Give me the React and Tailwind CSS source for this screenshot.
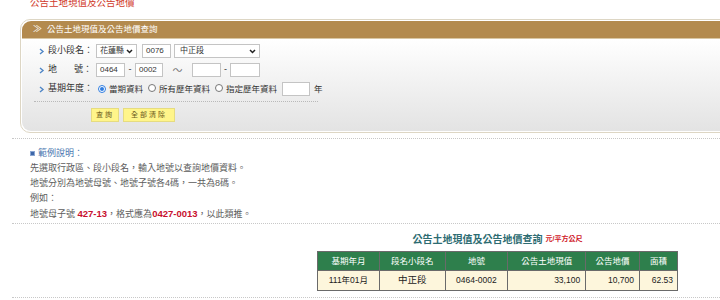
import React from 'react';

const Arrow = () => (
  <svg width="6" height="7" viewBox="0 0 6 7" className="shrink-0">
    <path d="M1 1 L4 3.5 L1 6" fill="none" stroke="#4f86c6" strokeWidth="1.4" />
  </svg>
);

const Caret = () => (
  <svg width="7" height="5" viewBox="0 0 7 5">
    <path d="M1 1 L3.5 3.5 L6 1" fill="none" stroke="#222" strokeWidth="1.5" />
  </svg>
);

const Box = ({ w, children, className = '' }) => (
  <div className={`h-[14px] ${w} border border-[#c4c4c4] bg-white flex items-center px-[3px] text-[8px] text-[#333] ${className}`}>
    {children}
  </div>
);

const Radio = ({ on }) => (
  <span className={`inline-flex items-center justify-center w-[8px] h-[8px] rounded-full border ${on ? 'border-[#2f7de1]' : 'border-[#777]'} bg-white`}>
    {on && <span className="w-[4px] h-[4px] rounded-full bg-[#2f7de1]" />}
  </span>
);

const Row = ({ label, children }) => (
  <div className="h-[14px] flex items-center">
    <div className="w-[26px] flex justify-end pr-[3px]"><Arrow /></div>
    <div className="w-[48px] text-[9px] text-[#333]">{label}</div>
    {children}
  </div>
);

export default function App() {
  return (
    <div className="w-[720px] h-[300px] overflow-hidden bg-white font-['Liberation_Sans','Noto_Sans_CJK_TC',sans-serif] text-[#333]">
      <div className="pl-[30px] -mt-[3px] text-[9.5px] leading-[12px] text-[#d03a2a]">公告土地現值及公告地價</div>

      <div className="ml-[20px] mt-[10px] w-[760px] rounded-l-[10px] border border-[#ddd6c4] p-px bg-white">
        <div className="h-[18px] rounded-tl-[9px] bg-[#b38a4e] border-b border-[#d9c7a4] flex items-center pl-[11px] gap-[5px] text-white text-[8.5px]">
          <span className="text-[9px] leading-none">≫</span>
          <span>公告土地現值及公告地價查詢</span>
        </div>
        <div className="h-[92px] rounded-bl-[9px] bg-gradient-to-b from-white to-[#e3e3e3] pt-[5px]">
          <div className="flex flex-col gap-[5px]">
            <Row label="段小段名：">
              <Box w="w-[41px]" className="justify-between"><span>花蓮縣</span><Caret /></Box>
              <Box w="w-[29px]" className="ml-[5px]">0076</Box>
              <Box w="w-[86px]" className="ml-[3px] justify-between pl-[5px]"><span>中正段</span><Caret /></Box>
            </Row>
            <Row label={<span>地<span className="inline-block w-[17px]" />號：</span>}>
              <Box w="w-[29px]">0464</Box>
              <span className="w-[10px] text-center text-[9px]">-</span>
              <Box w="w-[28px]">0002</Box>
              <span className="w-[29px] text-center text-[10px] text-[#777]">～</span>
              <Box w="w-[29px]" />
              <span className="w-[9px] text-center text-[9px]">-</span>
              <Box w="w-[30px]" />
            </Row>
            <Row label="基期年度：">
              <div className="flex items-center gap-[2px] ml-[2px] text-[8.5px]">
                <Radio on />
                <span className="ml-[1px]">當期資料</span>
                <span className="ml-[3px]"><Radio /></span>
                <span className="ml-[1px]">所有歷年資料</span>
                <span className="ml-[3px]"><Radio /></span>
                <span className="ml-[1px]">指定歷年資料</span>
              </div>
              <Box w="w-[28px]" className="ml-[5px]" />
              <span className="ml-[4px] text-[8.5px]">年</span>
            </Row>
          </div>
          <div className="ml-[12px] mt-[5px] w-[284px] border-t border-dotted border-[#b9b9b9]" />
          <div className="ml-[69px] mt-[6px] flex gap-[4px]">
            <div className="h-[14px] w-[28px] bg-[#fff58a] border border-[#e6dc80] flex items-center justify-center text-[7px] tracking-[2px] text-[#6b5a1a]">查詢</div>
            <div className="h-[14px] w-[52px] bg-[#fff58a] border border-[#e6dc80] flex items-center justify-center text-[7px] tracking-[2px] text-[#6b5a1a]">全部清除</div>
          </div>
        </div>
      </div>

      <div className="ml-[12px] mt-[5px] border-t border-dotted border-[#c8c8c8]" />

      <div className="mt-[7px] pl-[30px] text-[9px] leading-[15px] text-[#5c5c5c]">
        <div className="flex items-center gap-[3px] text-[#4a78b0]">
          <span className="w-[5px] h-[5px] bg-[#3d66a8] border border-[#8aa6d2]" />
          <span>範例說明：</span>
        </div>
        <div>先選取行政區、段小段名，輸入地號以查詢地價資料。</div>
        <div>地號分別為地號母號、地號子號各4碼，一共為8碼。</div>
        <div>例如：</div>
        <div>
          地號母子號 <b className="text-[#c8102e] text-[9.5px]">427-13</b>，格式應為<b className="text-[#c8102e] text-[9.5px]">0427-0013</b>，以此類推。
        </div>
      </div>

      <div className="ml-[12px] mt-[1px] border-t border-dotted border-[#c8c8c8]" />

      <div className="ml-[317px] w-[361px] mt-[7px]">
        <div className="h-[16px] flex items-center justify-center gap-[3px]">
          <span className="font-bold text-[10px] text-[#2d6c72]">公告土地現值及公告地價查詢</span>
          <span className="font-bold text-[7px] text-[#d0202a]">元/平方公尺</span>
        </div>
        <table className="mt-[4px] w-[361px] border-collapse text-[8.5px]">
          <thead>
            <tr className="h-[19px] bg-[#2e7f4c] text-white">
              <th className="w-[62px] border border-[#6a6a6a] font-normal">基期年月</th>
              <th className="w-[66px] border border-[#6a6a6a] font-normal">段名小段名</th>
              <th className="w-[63px] border border-[#6a6a6a] font-normal">地號</th>
              <th className="w-[78px] border border-[#6a6a6a] font-normal">公告土地現值</th>
              <th className="w-[54px] border border-[#6a6a6a] font-normal">公告地價</th>
              <th className="w-[38px] border border-[#6a6a6a] font-normal">面積</th>
            </tr>
          </thead>
          <tbody>
            <tr className="h-[20px] bg-[#fdf6dc] text-[#222]">
              <td className="border border-[#6a6a6a] text-center">111年01月</td>
              <td className="border border-[#6a6a6a] text-center text-[9.5px]">中正段</td>
              <td className="border border-[#6a6a6a] text-center">0464-0002</td>
              <td className="border border-[#6a6a6a] text-right pr-[5px]">33,100</td>
              <td className="border border-[#6a6a6a] text-right pr-[5px]">10,700</td>
              <td className="border border-[#6a6a6a] text-right pr-[4px]">62.53</td>
            </tr>
          </tbody>
        </table>
      </div>

      <div className="ml-[12px] mt-[6px] border-t border-dotted border-[#c8c8c8]" />
    </div>
  );
}
